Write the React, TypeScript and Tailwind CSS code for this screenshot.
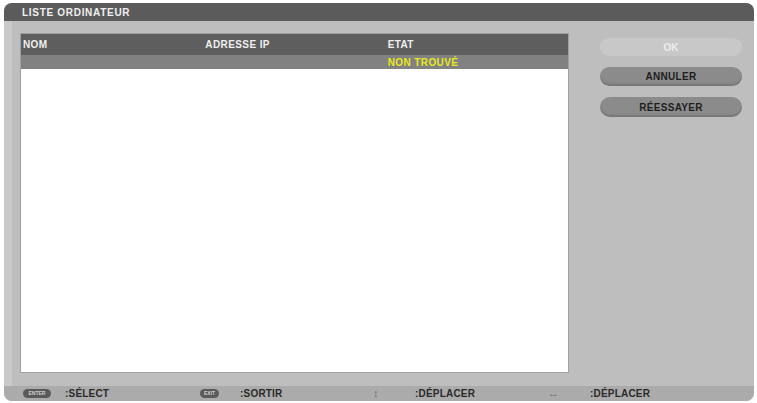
import React from "react";

const font = { fontFamily: '"Liberation Sans", Arial, sans-serif' };

function FooterItem({ icon, label }: { icon: React.ReactNode; label: string }) {
  return (
    <div className="flex items-center w-[175px] shrink-0">
      <div className="w-[42px] flex items-center">{icon}</div>
      <span className="text-[10px] font-bold text-[#2a2a2a] tracking-[0.2px]">{label}</span>
    </div>
  );
}

export default function App() {
  return (
    <div className="w-[757px] h-[403px] bg-white pt-[3px] pl-[4px] pr-[3px]" style={font}>
      <div className="h-[398px] rounded-[8px] overflow-hidden bg-[#bebebe] flex flex-col">
        <div className="h-[18px] bg-[#5b5b5b] flex items-center pl-[18px] shrink-0">
          <span className="text-[10px] font-bold text-[#f0f0f0] tracking-[0.7px]">LISTE ORDINATEUR</span>
        </div>
        <div className="flex-1 flex border-l-[8px] border-[#c9c9c9] pl-[8px] pt-[12px]">
          <div className="w-[549px] h-[340px] flex flex-col bg-white border border-[#a0a0a0]">
            <div className="h-[21px] bg-[#5e5e5e] flex items-center shrink-0">
              <span className="w-[183px] pl-[2px] text-[10px] font-bold text-[#eeeeee] tracking-[0.4px]">NOM</span>
              <span className="w-[183px] pl-[2px] text-[10px] font-bold text-[#eeeeee] tracking-[0.4px]">ADRESSE IP</span>
              <span className="w-[183px] pl-[2px] text-[10px] font-bold text-[#eeeeee] tracking-[0.4px]">ETAT</span>
            </div>
            <div className="h-[14px] bg-[#818181] flex items-center shrink-0">
              <span className="w-[183px]" />
              <span className="w-[183px]" />
              <span className="w-[183px] pl-[2px] text-[10px] font-bold text-[#e8e820] tracking-[0.4px]">NON TROUVÉ</span>
            </div>
            <div className="flex-1 bg-white" />
          </div>
          <div className="ml-[31px] pt-[5px] w-[142px] flex flex-col gap-[11px]">
            <div className="h-[18px] rounded-full bg-[#c8c8c8] flex items-center justify-center text-[10px] font-bold text-[#ececec]">OK</div>
            <div className="h-[19px] rounded-full bg-[#8b8b8b] shadow-[inset_0_-2px_2px_rgba(0,0,0,0.15)] flex items-center justify-center text-[10px] font-bold text-[#1e1e1e] tracking-[0.3px]">ANNULER</div>
            <div className="h-[20px] rounded-full bg-[#8b8b8b] shadow-[inset_0_-2px_2px_rgba(0,0,0,0.15)] flex items-center justify-center text-[10px] font-bold text-[#1e1e1e] tracking-[0.3px]">RÉESSAYER</div>
          </div>
        </div>
        <div className="h-[15px] bg-[#ababab] flex items-center pl-[19px] shrink-0">
          <FooterItem
            icon={
              <span className="w-[28px] h-[9px] rounded-full bg-[#5a5a5a] flex items-center justify-center text-[5px] font-bold text-[#cfcfcf]">ENTER</span>
            }
            label=":SÉLECT"
          />
          <FooterItem
            icon={
              <span className="ml-[2px] w-[19px] h-[9px] rounded-full bg-[#5a5a5a] flex items-center justify-center text-[5px] font-bold text-[#cfcfcf]">EXIT</span>
            }
            label=":SORTIR"
          />
          <FooterItem
            icon={<span className="ml-[0px] text-[11px] leading-none font-bold text-[#707070]">↕</span>}
            label=":DÉPLACER"
          />
          <FooterItem
            icon={<span className="ml-[0px] text-[11px] leading-none font-bold text-[#707070]">↔</span>}
            label=":DÉPLACER"
          />
        </div>
      </div>
    </div>
  );
}
